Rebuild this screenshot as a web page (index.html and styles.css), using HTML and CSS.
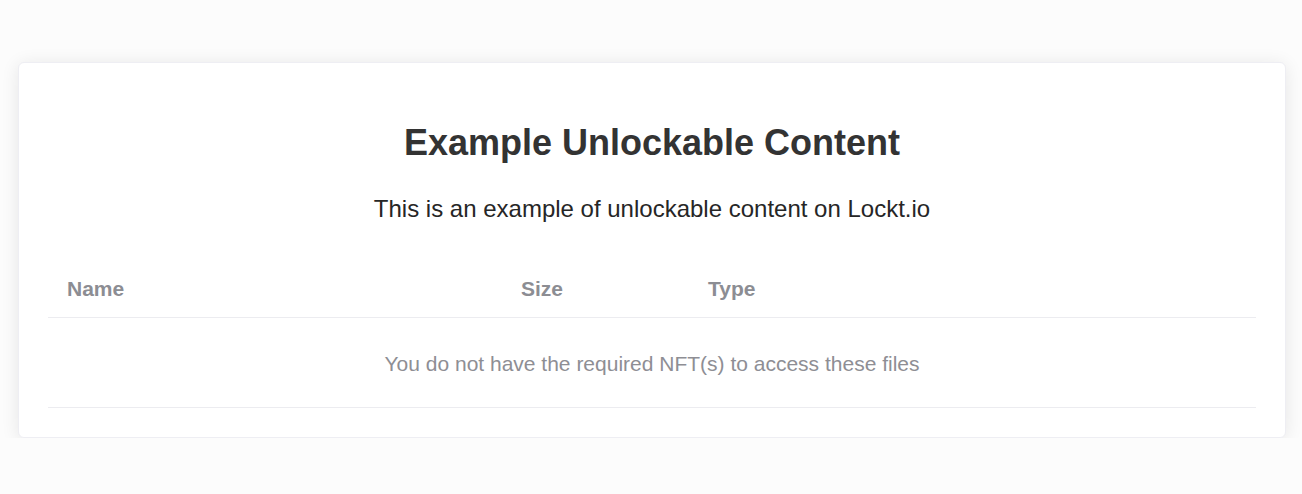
FILE: index.html
```html
<!DOCTYPE html>
<html>
<head>
<meta charset="utf-8">
<link rel="stylesheet" href="styles.css">
</head>
<body>
<div class="page">
  <div class="card">
    <h1 class="title">Example Unlockable Content</h1>
    <p class="subtitle">This is an example of unlockable content on Lockt.io</p>
    <table class="files">
      <thead>
        <tr>
          <th class="col-name">Name</th>
          <th class="col-size">Size</th>
          <th class="col-type">Type</th>
        </tr>
      </thead>
      <tbody>
        <tr>
          <td class="empty" colspan="3">You do not have the required NFT(s) to access these files</td>
        </tr>
      </tbody>
    </table>
  </div>
</div>
</body>
</html>
```
FILE: styles.css
```css
html, body {
  margin: 0;
  padding: 0;
  background: #fcfcfc;
  font-family: "Liberation Sans", Arial, sans-serif;
}
.page {
  padding: 62px 16px 0 18px;
}
.card {
  background: #ffffff;
  border-radius: 6px;
  box-shadow: 0 2px 18px rgba(0, 0, 0, 0.09);
  border: 1px solid #eeeef3;
  padding: 60px 29px 29px 29px;
}
.title {
  margin: 0;
  text-align: center;
  font-size: 36px;
  line-height: 40px;
  font-weight: 700;
  color: #333333;
}
.subtitle {
  margin: 32px 0 0 0;
  text-align: center;
  font-size: 24px;
  line-height: 28px;
  color: #262626;
}
.files {
  width: 100%;
  border-collapse: collapse;
  margin-top: 42px;
}
.files th {
  text-align: left;
  font-size: 21px;
  font-weight: 700;
  color: #8c8d93;
  padding: 12px 19px 16px 19px;
  line-height: 24px;
  border-bottom: 1px solid #ececf0;
}
.col-name { width: 416px; }
.col-size { width: 149px; }
.empty {
  text-align: center;
  font-size: 21px;
  line-height: 24px;
  color: #8e8e94;
  padding: 34px 0 31px 0;
  border-bottom: 1px solid #ececf0;
}
```
